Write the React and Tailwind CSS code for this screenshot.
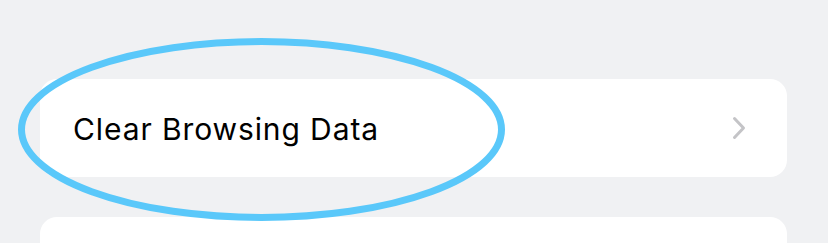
export default function App() {
  return (
    <div className="relative w-[828px] h-[243px] overflow-hidden bg-[#f0f1f3]" style={{ fontFamily: 'Inter, "Liberation Sans", sans-serif' }}>
      <div className="pt-[79px] pl-[40px] pr-[41px] flex flex-col gap-[40px]">
        <div className="h-[98px] rounded-[17px] bg-white flex items-center justify-between pl-[33px] pr-[41px]">
          <span className="text-[30px] leading-none text-black tracking-[0.9px] pt-[2px]">Clear Browsing Data</span>
          <svg width="14" height="24" viewBox="0 0 14 24" fill="none">
            <path d="M2.5 2.5 L11.5 12 L2.5 21.5" stroke="#c4c4c7" strokeWidth="3" strokeLinecap="round" strokeLinejoin="round" />
          </svg>
        </div>
        <div className="h-[98px] rounded-[17px] bg-white" />
      </div>
      <svg className="absolute left-0 top-0" width="828" height="243" viewBox="0 0 828 243" fill="none">
        <ellipse cx="261.5" cy="129.5" rx="240" ry="88" stroke="#5ac8fa" strokeWidth="7" />
      </svg>
    </div>
  );
}
